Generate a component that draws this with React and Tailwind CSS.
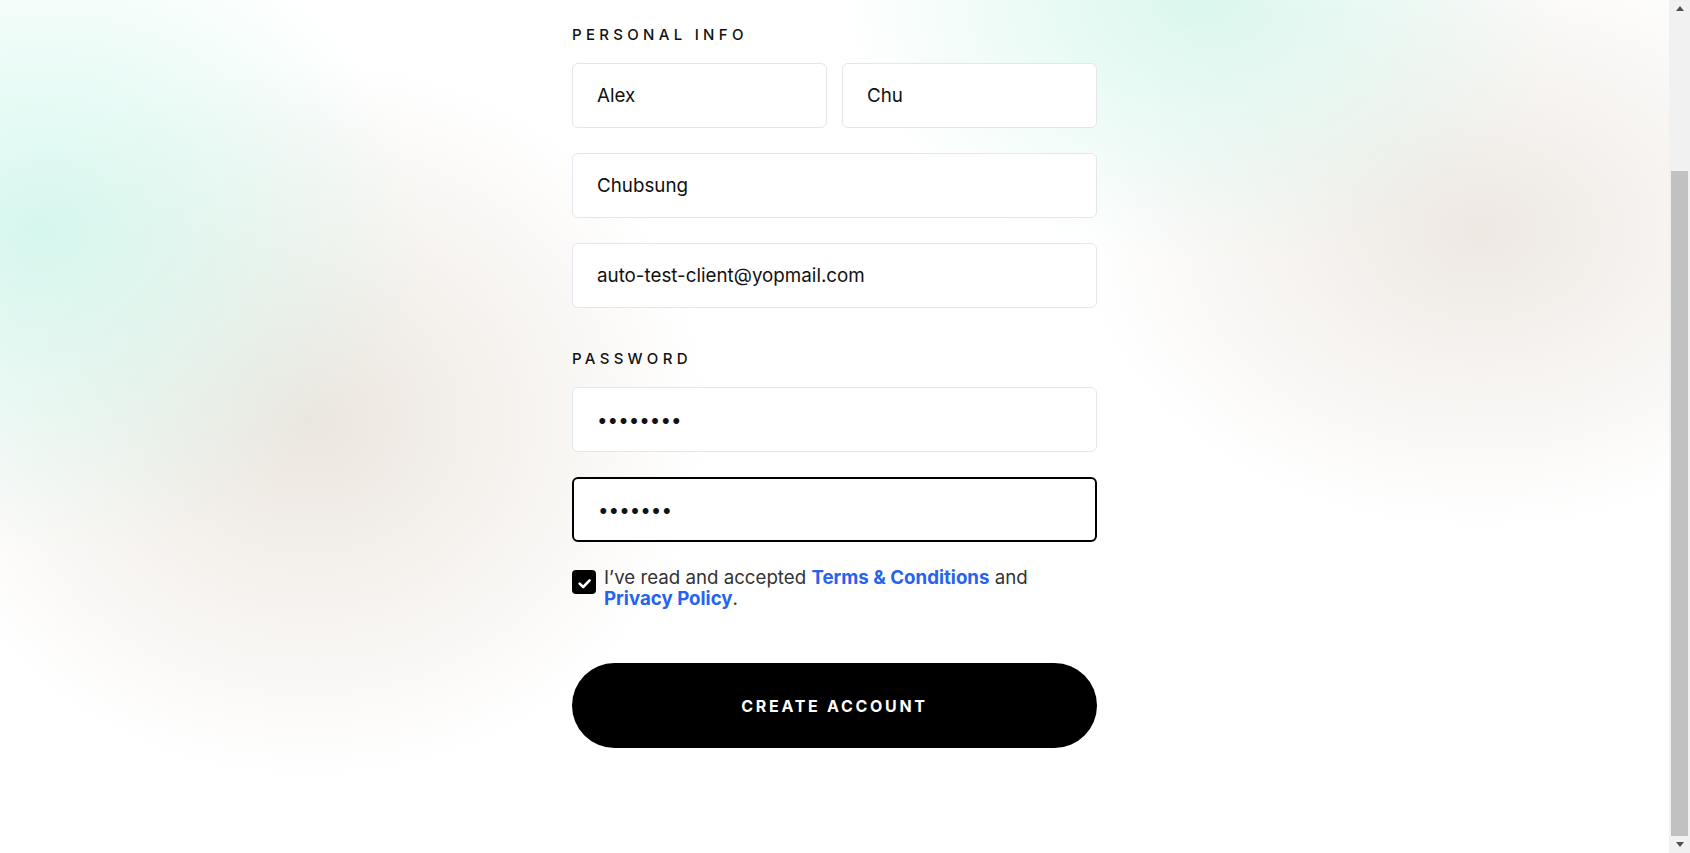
const Field = ({ type = "text", value, active }) => {
  return (
    <input
      type={type}
      defaultValue={value}
      className={
        active
          ? "h-[65px] w-full rounded-md border-2 border-black bg-white pl-[24px] pr-6 text-[18.8px] text-[#111] outline-none"
          : "h-[65px] w-full rounded-md border border-[#e6e5ee] bg-white pl-[24px] pr-6 text-[18.8px] text-[#111] outline-none"
      }
    />
  );
};

const Label = ({ children }) => (
  <h2 className="mb-[18px] text-[15px] leading-5 font-medium tracking-[4.3px] text-[#111]">
    {children}
  </h2>
);

const CheckIcon = () => (
  <svg viewBox="0 0 24 24" className="h-6 w-6" fill="none">
    <path
      d="M7.6 13.6 11.2 17 17.6 10.4"
      stroke="white"
      strokeWidth="2.6"
      strokeLinecap="round"
      strokeLinejoin="round"
    />
  </svg>
);

const Arrow = ({ down }) => (
  <svg viewBox="0 0 8 5" className={down ? "h-[5px] w-2 rotate-180" : "h-[5px] w-2"}>
    <path d="M4 0 8 5H0z" fill="#505050" />
  </svg>
);

// classic window scrollbar, page sits scrolled to the bottom
const ScrollBar = () => (
  <div className="flex h-screen w-[21px] shrink-0 flex-col bg-[#f1f1f1]">
    <div className="flex h-[17px] items-center justify-center">
      <Arrow />
    </div>
    <div className="h-[154px]" />
    <div className="mx-[2px] flex-1 bg-[#c1c1c1]" />
    <div className="flex h-[17px] items-center justify-center">
      <Arrow down />
    </div>
  </div>
);

export default function App() {
  return (
    <div className="flex h-screen overflow-hidden bg-white font-['Inter',sans-serif]">
      <main className="flex h-screen flex-1 flex-col justify-end overflow-hidden bg-[image:radial-gradient(ellipse_380px_320px_at_40px_230px,rgba(212,247,237,0.95)_0%,rgba(212,247,237,0)_100%),radial-gradient(ellipse_400px_360px_at_310px_420px,rgba(235,228,220,0.95)_0%,rgba(235,228,220,0)_100%),radial-gradient(ellipse_360px_260px_at_1200px_0px,rgba(214,246,236,0.9)_0%,rgba(214,246,236,0)_100%),radial-gradient(ellipse_400px_300px_at_1480px_230px,rgba(237,231,225,0.95)_0%,rgba(237,231,225,0)_100%)]">
        <div className="flex justify-center pb-[105px]">
          <form className="w-[525px]" onSubmit={(e) => e.preventDefault()}>
            <section>
              <Label>PERSONAL INFO</Label>
              <div className="flex flex-col gap-[25px]">
                <div className="grid grid-cols-2 gap-[15px]">
                  <Field value="Alex" />
                  <Field value="Chu" />
                </div>
                <Field value="Chubsung" />
                <Field type="email" value="auto-test-client@yopmail.com" />
              </div>
            </section>

            <section className="mt-[41px]">
              <Label>PASSWORD</Label>
              <div className="flex flex-col gap-[25px]">
                <Field type="password" value="12345678" />
                <Field type="password" value="1234567" active />
              </div>
            </section>

            <label className="mt-[25px] flex items-start gap-2">
              <span className="mt-[3px] flex h-6 w-6 shrink-0 items-center justify-center rounded-[4px] bg-black">
                <CheckIcon />
              </span>
              <span className="text-[18.7px] leading-[21px] text-[#333]">
                I’ve read and accepted{" "}
                <a href="#" className="font-bold text-[#2563f0]">
                  Terms &amp; Conditions
                </a>{" "}
                and{" "}
                <a href="#" className="font-bold text-[#2563f0]">
                  Privacy Policy
                </a>
                .
              </span>
            </label>

            <button
              type="submit"
              className="mt-[54px] flex h-[85px] w-full items-center justify-center rounded-full bg-black text-[16px] font-bold tracking-[2.7px] text-white"
            >
              CREATE ACCOUNT
            </button>
          </form>
        </div>
      </main>
      <ScrollBar />
    </div>
  );
}
